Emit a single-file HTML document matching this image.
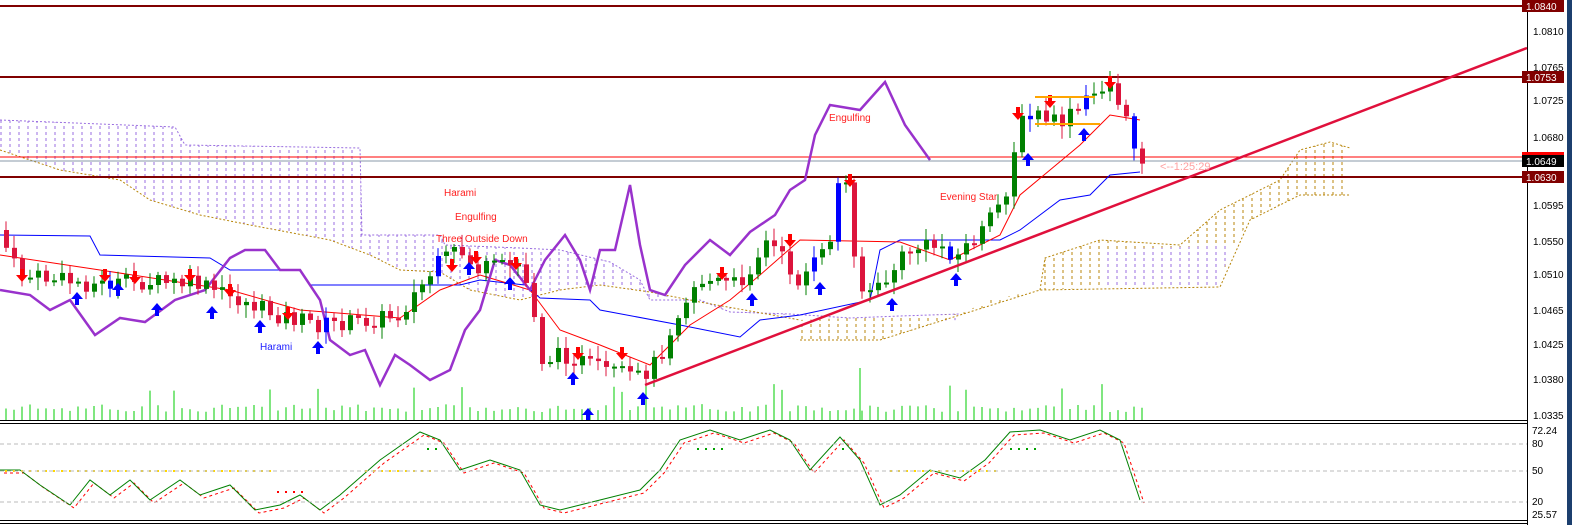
<!DOCTYPE html>
<html><head><meta charset="utf-8"><style>
html,body{margin:0;padding:0;background:#fff;width:1572px;height:525px;overflow:hidden;font-family:"Liberation Sans",sans-serif}
svg{display:block}
</style></head><body>
<svg id="s" width="1572" height="525" xmlns="http://www.w3.org/2000/svg" font-family="Liberation Sans, sans-serif">
<defs>
<pattern id="pp" width="9" height="6" patternUnits="userSpaceOnUse"><line x1="1" y1="0" x2="1" y2="3" stroke="#9a6ee0" stroke-width="1"/></pattern>
<pattern id="pt" width="9" height="6" patternUnits="userSpaceOnUse"><line x1="1" y1="0" x2="1" y2="3" stroke="#b8860b" stroke-width="1"/></pattern>
</defs>
<rect x="1567" y="0" width="5" height="525" fill="#1c3f6e"/>
<polygon points="0,120 175,127 185,145 360,148 362,235 440,235 445,245 520,248 560,250 610,262 640,280 650,300 700,300 730,312 790,314 800,320 850,318 900,316 960,314 960,320 900,322 850,325 800,320 700,302 650,292 600,285 560,290 520,300 470,290 440,272 400,270 370,255 330,240 250,225 200,215 150,200 120,180 60,170 0,150" fill="url(#pp)"/>
<polyline points="0,120 175,127 185,145 360,148 362,235 440,235 445,245 520,248 560,250 610,262 640,280 650,300 700,300 730,312 790,314 850,318 900,316 960,314" fill="none" stroke="#9a6ee0" stroke-dasharray="2,2"/>
<polyline points="0,150 60,170 120,180 150,200 200,215 250,225 330,240 370,255 400,270 440,272 470,290 520,300 560,290 600,285 650,292 700,302 800,320" fill="none" stroke="#b8860b" stroke-dasharray="2,2"/>
<polygon points="800,320 900,316 960,314 990,300 1040,290 1045,258 1100,240 1180,245 1220,210 1280,180 1300,150 1330,142 1350,148 1350,195 1300,195 1250,220 1230,250 1220,287 1100,287 1040,290 960,315 880,340 800,340" fill="url(#pt)"/>
<polygon points="1100,250 1230,245 1220,287 1100,287" fill="url(#pp)"/>
<polyline points="800,340 880,340 960,315 1040,290 1220,287 1250,220 1300,195 1350,195" fill="none" stroke="#b8860b" stroke-dasharray="2,2"/>
<polyline points="1040,290 1045,258 1100,240 1180,245 1220,210 1280,180 1300,150 1330,142 1350,148" fill="none" stroke="#b8860b" stroke-dasharray="2,2"/>
<line x1="0" y1="6" x2="1527" y2="6" stroke="#800000" stroke-width="2"/>
<line x1="0" y1="77" x2="1527" y2="77" stroke="#800000" stroke-width="2"/>
<line x1="0" y1="177" x2="1527" y2="177" stroke="#800000" stroke-width="2"/>
<line x1="0" y1="157" x2="1527" y2="157" stroke="#ff0000" stroke-width="1"/>
<line x1="0" y1="161" x2="1527" y2="161" stroke="#8899aa" stroke-width="1"/>
<g id="dyn"></g>
<line x1="645" y1="385" x2="1527" y2="48" stroke="#e0103c" stroke-width="2.5"/>
<text x="1160" y="170" fill="#ffa0a0" font-size="11">&lt;--1:25:29</text>
<g font-size="10" fill="#ff2020">
<text x="444" y="196">Harami</text>
<text x="455" y="220">Engulfing</text>
<text x="436" y="242">Three Outside Down</text>
<text x="829" y="121">Engulfing</text>
<text x="940" y="200">Evening Star</text>
</g>
<text x="260" y="350" font-size="10" fill="#2020ff">Harami</text>
<line x1="1527.5" y1="0" x2="1527.5" y2="525" stroke="#000"/>
<line x1="0" y1="420.5" x2="1527" y2="420.5" stroke="#000"/>
<line x1="0" y1="423.5" x2="1527" y2="423.5" stroke="#000"/>
<line x1="0" y1="520.5" x2="1527" y2="520.5" stroke="#000"/>
<line x1="0" y1="523.5" x2="1527" y2="523.5" stroke="#000"/>
<g stroke="#bbb" stroke-dasharray="4,3"><line x1="0" y1="444" x2="1527" y2="444"/><line x1="0" y1="471" x2="1527" y2="471"/><line x1="0" y1="502" x2="1527" y2="502"/></g>
<g font-size="10" fill="#000">
<text x="1533" y="35">1.0810</text><text x="1533" y="71">1.0765</text><text x="1533" y="104">1.0725</text>
<text x="1533" y="141">1.0680</text><text x="1533" y="209">1.0595</text><text x="1533" y="245">1.0550</text>
<text x="1533" y="278">1.0510</text><text x="1533" y="314">1.0465</text><text x="1533" y="348">1.0425</text>
<text x="1533" y="383">1.0380</text><text x="1533" y="419">1.0335</text>
<text x="1532" y="434">72.24</text><text x="1532" y="447">80</text><text x="1532" y="474">50</text><text x="1532" y="505">20</text><text x="1532" y="518">25.57</text>
</g>
<rect x="1522" y="0" width="42" height="12" fill="#800000"/><text x="1526" y="10" font-size="10" fill="#fff">1.0840</text>
<rect x="1522" y="71" width="42" height="12" fill="#800000"/><text x="1526" y="81" font-size="10" fill="#fff">1.0753</text>
<rect x="1522" y="152" width="42" height="6" fill="#ff0000"/>
<rect x="1522" y="155" width="42" height="12" fill="#000"/><text x="1526" y="165" font-size="10" fill="#fff">1.0649</text>
<rect x="1522" y="171" width="42" height="12" fill="#800000"/><text x="1526" y="181" font-size="10" fill="#fff">1.0630</text>
</svg>
<script>
var NS="http://www.w3.org/2000/svg",g=document.getElementById("dyn");
function el(t,a){var e=document.createElementNS(NS,t);for(var k in a)e.setAttribute(k,a[k]);g.appendChild(e);return e}
function interp(p,x){for(var i=1;i<p.length;i++){if(x<=p[i][0]){var a=p[i-1],b=p[i];return a[1]+(b[1]-a[1])*(x-a[0])/(b[0]-a[0]);}}return p[p.length-1][1]}
function pl(p,c,w,d){var a={points:p.map(function(q){return q.join(",")}).join(" "),fill:"none",stroke:c,"stroke-width":w};if(d)a["stroke-dasharray"]=d;el("polyline",a)}
var seed=7;function rnd(){seed=(seed*9301+49297)%233280;return seed/233280}
var price=[[0,230],[20,275],[60,280],[100,285],[150,282],[200,285],[240,300],[280,315],[320,325],[360,322],[400,315],[440,265],[460,250],[480,270],[520,265],[535,300],[540,360],[570,355],[600,370],[640,378],[660,360],[680,310],[700,280],[740,285],[770,240],[800,280],[830,250],[840,185],[850,185],[860,290],[880,290],[910,250],[940,245],[960,255],[990,225],[1010,185],[1020,125],[1040,115],[1060,125],[1080,110],[1100,90],[1110,80],[1120,100],[1130,130],[1140,155]];
var blue=[[0,235],[90,236],[100,255],[210,258],[230,270],[300,270],[310,285],[460,285],[480,280],[525,285],[540,298],[590,300],[600,310],[680,325],[740,337],[760,320],[800,315],[870,300],[880,250],[900,240],[1000,240],[1020,230],[1060,200],[1090,195],[1110,175],[1140,172]];
var red=[[0,255],[100,270],[230,290],[300,310],[400,318],[440,290],[480,275],[530,290],[560,330],[600,345],[650,365],[690,325],[730,300],[760,275],[800,240],[900,242],[950,260],[1000,235],[1020,195],[1050,170],[1080,145],[1110,115],[1140,120]];
var purple=[[0,290],[30,295],[50,310],[70,300],[95,335],[120,318],[145,322],[175,300],[205,290],[230,258],[245,250],[265,250],[280,270],[300,270],[320,300],[330,340],[350,355],[365,350],[380,385],[395,355],[410,365],[430,380],[450,370],[465,330],[480,310],[495,260],[510,265],[530,290],[545,260],[565,235],[580,260],[590,290],[600,250],[615,250],[630,185],[640,245],[650,290],[665,295],[685,265],[710,240],[730,255],[750,232],[775,215],[790,190],[805,180],[815,135],[830,105],[860,110],[885,82],[905,125],[930,160]];
pl(blue,"#0000ff",1);pl(red,"#ff0000",1);pl(purple,"#9932cc",2.5);
var prev=interp(price,0);
for(var x=4;x<=1140;x+=8){var c=interp(price,x+4)+(rnd()-0.5)*18;var o=prev;var isUp=c<o;
var hi=Math.min(o,c)-3-rnd()*10,lo=Math.max(o,c)+3+rnd()*10;
var col=isUp?"#008000":"#dc143c";if(rnd()<0.05)col="#0000ff";
el("line",{x1:x+2,y1:hi,x2:x+2,y2:lo,stroke:col,"stroke-width":1});
el("rect",{x:x,y:Math.min(o,c),width:5,height:Math.max(2,Math.abs(c-o)),fill:col});
prev=c;
var vh=8+rnd()*8;if(rnd()<0.08)vh+=20;
el("line",{x1:x+2,y1:420-vh,x2:x+2,y2:420,stroke:"#00cc00","stroke-width":1});}
el("line",{x1:860,y1:368,x2:860,y2:420,stroke:"#00cc00"});
function upA(x,y){el("path",{d:"M"+x+","+y+" l-6,7 h4 v6 h4 v-6 h4 z",fill:"#0000ff"})}
function dnA(x,y){el("path",{d:"M"+x+","+y+" l-6,-7 h4 v-6 h4 v6 h4 z",fill:"#ff0000"})}
[[77,292],[118,283],[157,303],[212,306],[260,320],[318,341],[469,262],[510,277],[573,372],[588,408],[643,392],[752,293],[820,282],[892,298],[956,273],[1028,153],[1084,128]].forEach(function(a){upA(a[0],a[1])});
[[22,282],[105,282],[135,284],[190,282],[230,297],[288,320],[452,272],[476,264],[516,270],[578,360],[622,360],[722,280],[790,247],[850,187],[1018,120],[1050,108],[1110,89]].forEach(function(a){dnA(a[0],a[1])});
el("line",{x1:1035,y1:97,x2:1095,y2:97,stroke:"#ffa500","stroke-width":2});
el("line",{x1:1035,y1:124,x2:1100,y2:124,stroke:"#ffa500","stroke-width":2});
var st=[[0,470],[20,470],[40,485],[70,505],[90,480],[110,495],[130,480],[150,500],[180,480],[200,495],[230,485],[255,510],[280,505],[300,495],[320,510],[340,495],[380,460],[420,432],[440,440],[460,470],[490,460],[520,470],[540,505],[560,510],[600,500],[640,490],[660,470],[680,440],[710,430],[740,440],[770,430],[790,440],[810,470],[840,437],[860,460],[880,505],[900,495],[930,470],[960,478],[985,460],[1010,432],[1040,430],[1070,440],[1100,430],[1120,440],[1140,500]];
pl(st.map(function(p){return [p[0]+4,p[1]+3]}),"#ff0000",1,"3,3");pl(st,"#008000",1);
for(var x=5;x<270;x+=8)el("rect",{x:x,y:470,width:2,height:2,fill:"#ffd700"});
for(var x=365;x<430;x+=8)el("rect",{x:x,y:470,width:2,height:2,fill:"#ffd700"});
for(var x=890;x<1000;x+=8)el("rect",{x:x,y:470,width:2,height:2,fill:"#ffd700"});
[277,285,293,301].forEach(function(x){el("rect",{x:x,y:491,width:2,height:2,fill:"#ff0000"})});
[427,435,697,705,713,721,842,1010,1018,1026,1034].forEach(function(x){el("rect",{x:x,y:448,width:2,height:2,fill:"#00a000"})});
</script>
</body></html>
